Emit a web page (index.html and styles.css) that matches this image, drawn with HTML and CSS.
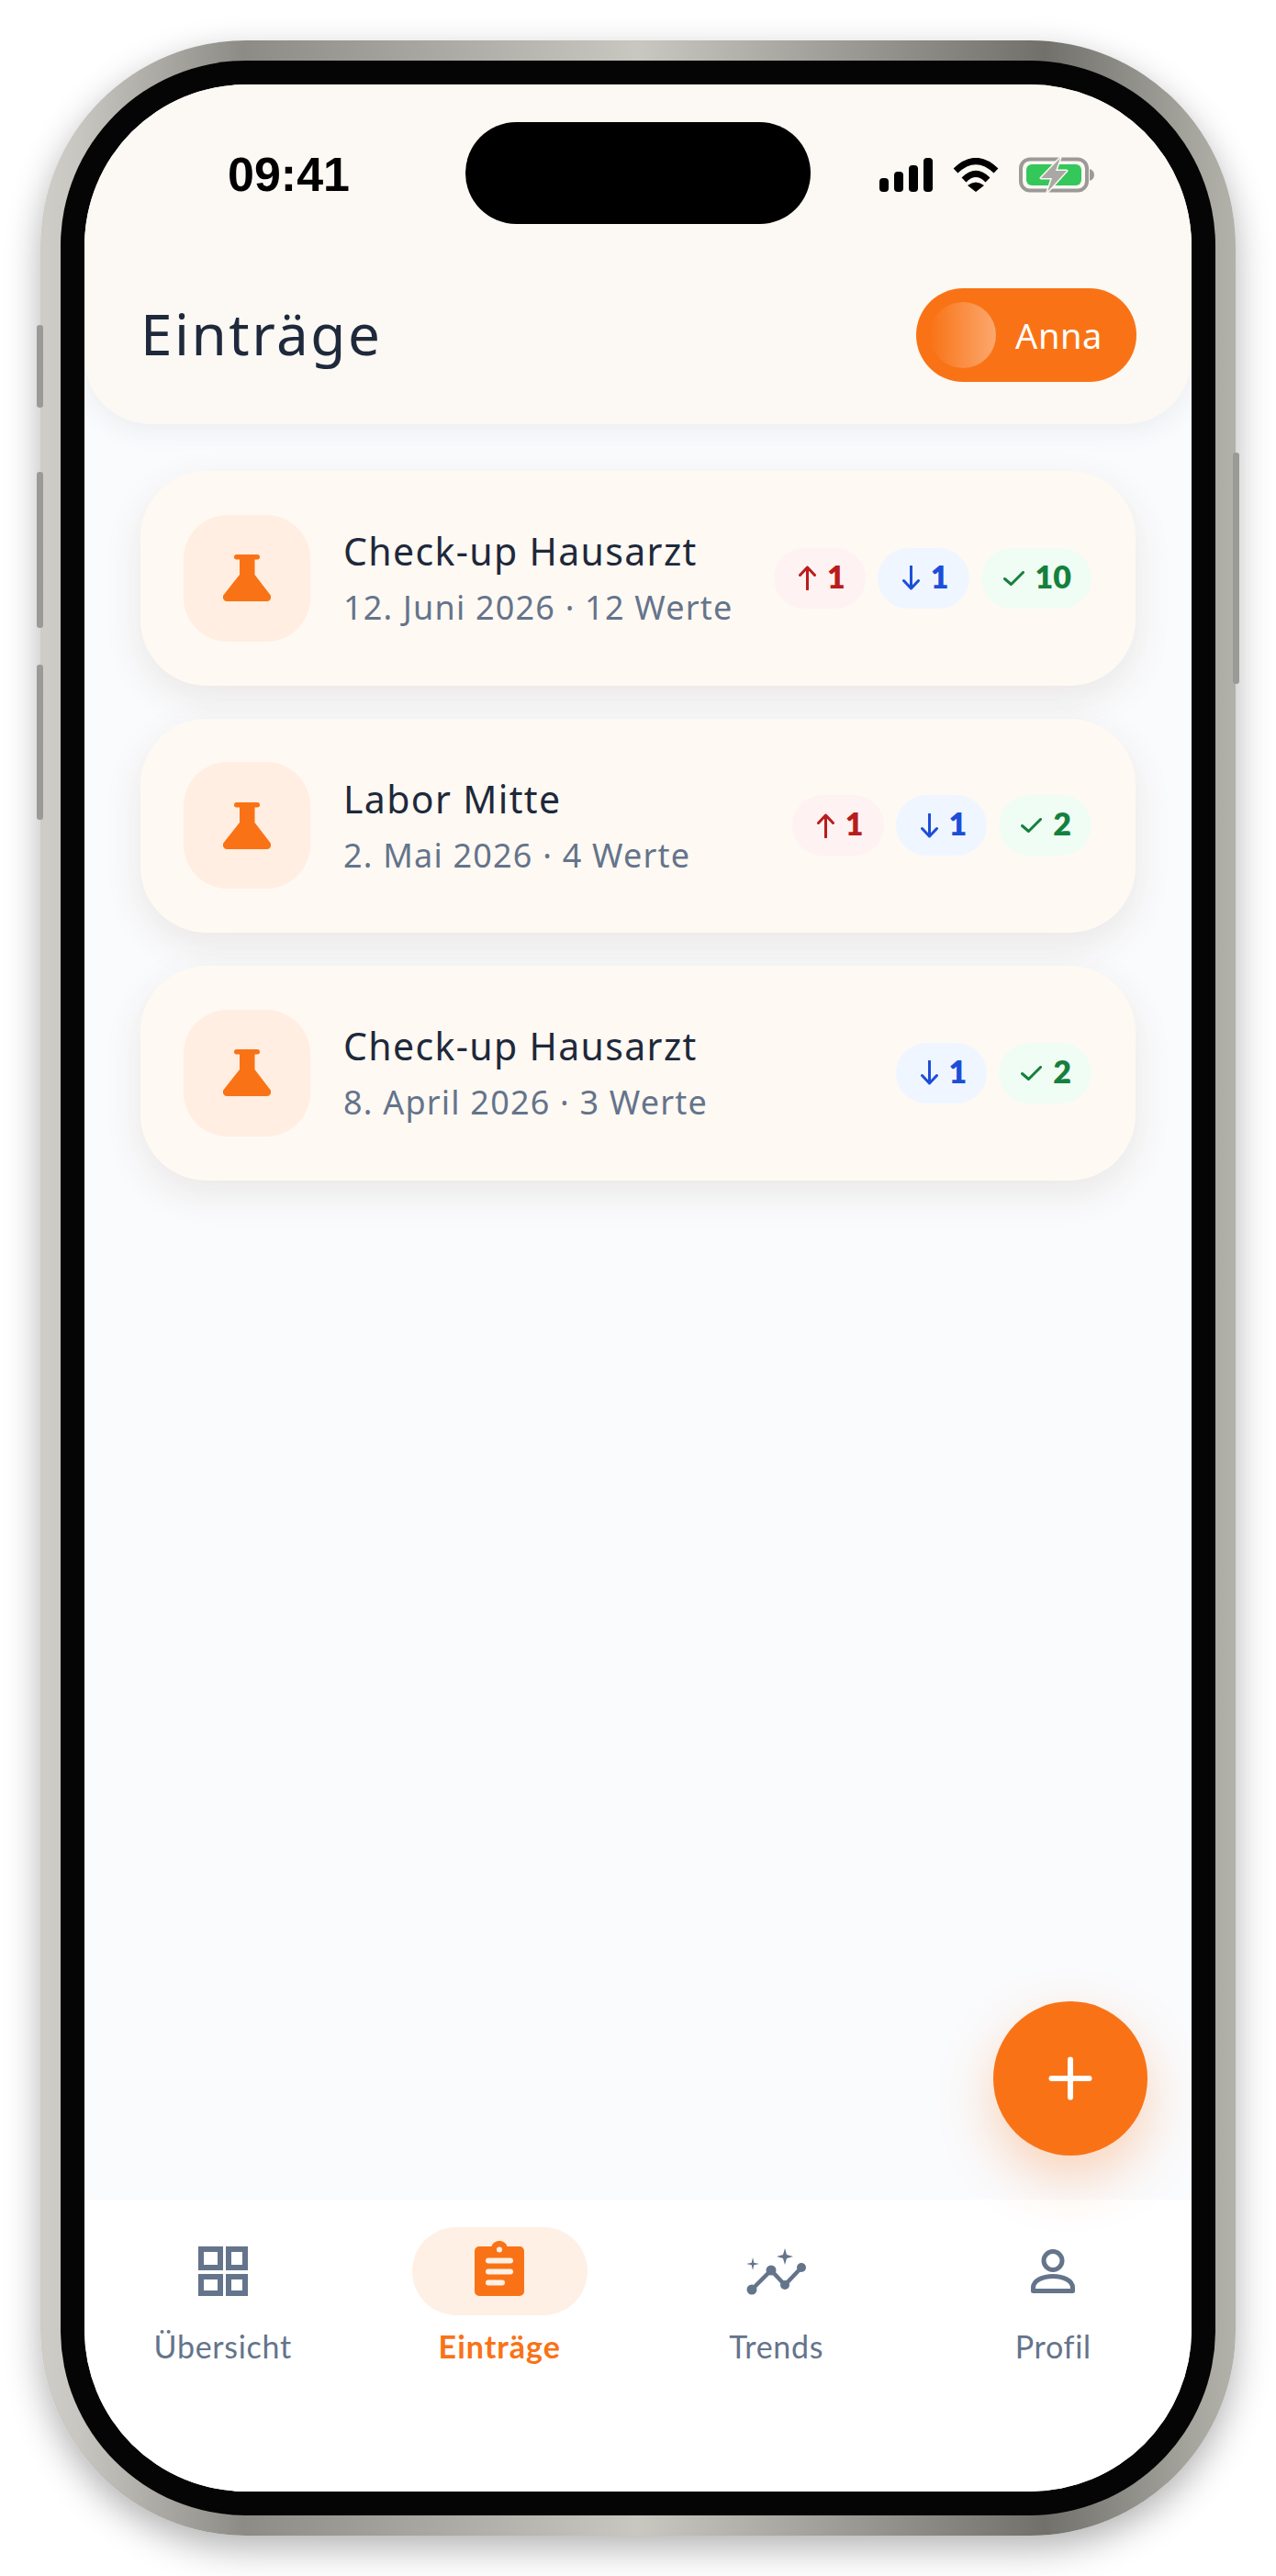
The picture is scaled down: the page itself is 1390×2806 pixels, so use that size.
FILE: index.html
```html
<!DOCTYPE html>
<html lang="de">
<head>
<meta charset="utf-8">
<title>Einträge</title>
<link rel="stylesheet" href="styles.css">
</head>
<body>
<div class="phone">
  <span class="side side-a"></span>
  <span class="side side-b"></span>
  <span class="side side-c"></span>
  <span class="side side-r"></span>
  <div class="bezel">
    <div class="screen">
      <div class="island"></div>
      <header class="header">
        <div class="status">
          <span class="time">09:41</span>
          <div class="status-icons">
            <svg class="i-signal" viewBox="0 0 58 37"><rect x="0" y="22" width="10" height="15" rx="4"/><rect x="16" y="15" width="10" height="22" rx="4"/><rect x="32" y="8" width="10" height="29" rx="4"/><rect x="48" y="0" width="10" height="37" rx="4"/></svg>
            <svg class="i-wifi" viewBox="0 0 50 37"><path class="wf" d="M3 14Q25 -7 47 14"/><path class="wf" d="M12 24Q25 11 38 24"/><path d="M16 30Q25 23 34 30L25 37Z"/></svg>
            <svg class="i-batt" viewBox="0 0 82 39"><rect class="b-out" x="2" y="2.500" width="72" height="34" rx="10"/><path class="b-cap" d="M77 13c3 1 5 3 5 6.500s-2 5.500-5 6.500z"/><rect class="b-fill" x="8" y="8" width="60" height="23" rx="6"/><path class="b-bolt" d="M45 1L24 23H36L31 38L52 15H40Z"/></svg>
          </div>
        </div>
        <div class="title-row">
          <h1 class="title">Einträge</h1>
          <div class="user-pill"><span class="knob"></span><span class="user-name">Anna</span></div>
        </div>
      </header>

      <main class="list">
        <article class="card">
          <div class="card-icon"><svg class="i-flask" viewBox="0 0 52 51"><use href="#flask"/></svg></div>
          <div class="card-text">
            <div class="card-title">Check-up Hausarzt</div>
            <div class="card-sub">12. Juni 2026 · 12 Werte</div>
          </div>
          <div class="badges">
            <span class="badge red"><svg class="i-arrow" viewBox="0 0 19 27"><use href="#up"/></svg><b>1</b></span>
            <span class="badge blue"><svg class="i-arrow" viewBox="0 0 19 27"><use href="#down"/></svg><b>1</b></span>
            <span class="badge green"><svg class="i-check" viewBox="0 0 23 16"><use href="#check"/></svg><b>10</b></span>
          </div>
        </article>
        <article class="card">
          <div class="card-icon"><svg class="i-flask" viewBox="0 0 52 51"><use href="#flask"/></svg></div>
          <div class="card-text">
            <div class="card-title">Labor Mitte</div>
            <div class="card-sub">2. Mai 2026 · 4 Werte</div>
          </div>
          <div class="badges">
            <span class="badge red"><svg class="i-arrow" viewBox="0 0 19 27"><use href="#up"/></svg><b>1</b></span>
            <span class="badge blue"><svg class="i-arrow" viewBox="0 0 19 27"><use href="#down"/></svg><b>1</b></span>
            <span class="badge green"><svg class="i-check" viewBox="0 0 23 16"><use href="#check"/></svg><b>2</b></span>
          </div>
        </article>
        <article class="card">
          <div class="card-icon"><svg class="i-flask" viewBox="0 0 52 51"><use href="#flask"/></svg></div>
          <div class="card-text">
            <div class="card-title">Check-up Hausarzt</div>
            <div class="card-sub">8. April 2026 · 3 Werte</div>
          </div>
          <div class="badges">
            <span class="badge blue"><svg class="i-arrow" viewBox="0 0 19 27"><use href="#down"/></svg><b>1</b></span>
            <span class="badge green"><svg class="i-check" viewBox="0 0 23 16"><use href="#check"/></svg><b>2</b></span>
          </div>
        </article>
      </main>

      <button class="fab" type="button" aria-label="Neu"><svg class="i-plus" viewBox="0 0 48 48"><path d="M24 3.500V44.500M3.500 24H44.500"/></svg></button>

      <nav class="nav">
        <div class="tab">
          <span class="tab-icon"><svg class="i-grid" viewBox="0 0 54 54"><path d="M3 3h21v20H3zM33 3h18v20H33zM3 33h21v18H3zM33 33h18v18H33z"/></svg></span>
          <span class="tab-label">Übersicht</span>
        </div>
        <div class="tab active">
          <span class="tab-icon"><svg class="i-clip" viewBox="0 0 54 60"><path class="cb" d="M5 6h13.500C19.500 2.500 23 0 27 0s7.500 2.500 8.500 6H49a5 5 0 0 1 5 5v44a5 5 0 0 1-5 5H5a5 5 0 0 1-5-5V11a5 5 0 0 1 5-5z"/><circle class="cl-dot" cx="27" cy="9.500" r="3"/><path class="cl" d="M15 21.500H39M15 33.500H39M15 45.500H30"/></svg></span>
          <span class="tab-label">Einträge</span>
        </div>
        <div class="tab">
          <span class="tab-icon"><svg class="i-trend" viewBox="0 0 65 51"><path class="tl" d="M6 45L27 24L42 40L60 21"/><circle cx="6" cy="45" r="5.500"/><circle cx="27" cy="24" r="5.500"/><circle cx="42" cy="40" r="5"/><circle cx="60" cy="21" r="5"/><path d="M42 0l2 7 7 2-7 2-2 7-2-7-7-2 7-2z"/><path d="M7 10l1.300 5.700 5.700 1.300-5.700 1.300L7 24l-1.300-5.700L0 17l5.700-1.300z"/></svg></span>
          <span class="tab-label">Trends</span>
        </div>
        <div class="tab">
          <span class="tab-icon"><svg class="i-user" viewBox="0 0 48 48"><circle class="us" cx="24" cy="12.500" r="10"/><path class="us" d="M2.500 45.500V42C2.500 34 13 29.500 24 29.500S45.500 34 45.500 42v3.500z"/></svg></span>
          <span class="tab-label">Profil</span>
        </div>
      </nav>
    </div>
  </div>
</div>

<svg class="defs" width="0" height="0" aria-hidden="true">
  <defs>
    <g id="flask"><rect x="12" y="0" width="28" height="5.500" rx="2.700"/><path d="M18 4h16.500v18L51 43.500a4.500 4.500 0 0 1-3.500 7.500H4.500A4.500 4.500 0 0 1 1 43.500L18 22z"/></g>
    <path id="up" class="ar" d="M9.500 26V2M1.500 10.500L9.500 2l8 8.500"/>
    <path id="down" class="ar" d="M9.500 1V25M1.500 16.500L9.500 25l8-8.500"/>
    <path id="check" class="ar" d="M1.500 8.500L8.500 14.500L21.500 1.500"/>
  </defs>
</svg>
</body>
</html>
```
FILE: styles.css
```css
* { box-sizing: border-box; }
html, body { margin: 0; padding: 0; background: #fff; }
body { width: 1390px; height: 2806px; overflow: hidden; font-family: "Lato", "Noto Sans", sans-serif; }
.defs { position: absolute; }

.phone {
  position: relative;
  width: 1302px;
  height: 2718px;
  margin: 44px 0 0 44px;
  padding: 22px;
  border-radius: 224px;
  background: linear-gradient(90deg, #cfcdc8 0%, #c9c7c2 3%, #8c8b86 17%, #c8c7c0 50%, #71706b 84%, #a8a8a1 97%, #b2b1aa 100%);
  box-shadow: 0 14px 38px rgba(0, 0, 0, .3);
}
.side { position: absolute; width: 7px; background: #9a9a96; border-radius: 3px; }
.side-a { left: -4px; top: 310px; height: 90px; }
.side-b { left: -4px; top: 470px; height: 170px; }
.side-c { left: -4px; top: 680px; height: 169px; }
.side-r { right: -4px; top: 449px; height: 252px; }

.bezel { height: 100%; padding: 26px; border-radius: 202px; background: #050505; }
.screen {
  position: relative;
  display: flex;
  flex-direction: column;
  height: 100%;
  overflow: hidden;
  border-radius: 176px;
  background: #fafbfd;
}
.island { position: absolute; left: 415px; top: 41px; width: 376px; height: 111px; border-radius: 56px; background: #000; z-index: 3; }

.header {
  flex: none;
  height: 370px;
  padding-top: 79px;
  background: #fcf8f3;
  border-radius: 0 0 72px 72px;
  box-shadow: 0 6px 30px rgba(30, 41, 59, .07);
  z-index: 1;
}
.status { display: flex; justify-content: space-between; align-items: center; height: 38px; padding: 0 106px 0 156px; }
.time { font: 700 52px/38px "Liberation Sans", Arial, sans-serif; color: #000; }
.status-icons { display: flex; align-items: center; gap: 22px; }
.i-signal { width: 58px; height: 37px; fill: #000; display: block; }
.i-wifi { width: 50px; height: 37px; fill: #000; display: block; }
.wf { fill: none; stroke: #000; stroke-width: 7; }
.i-batt { width: 82px; height: 39px; display: block; }
.b-out { fill: none; stroke: #9c9a96; stroke-width: 4; }
.b-cap { fill: #9c9a96; }
.b-fill { fill: #34c759; }
.b-bolt { fill: #aaa8a4; stroke: #fcf8f3; stroke-width: 3; stroke-linejoin: round; paint-order: stroke; }

.title-row { display: flex; justify-content: space-between; align-items: center; margin-top: 105px; padding: 0 60px 0 61px; }
.title { margin: 0 0 4px; font-family: "Noto Sans", sans-serif; font-size: 62px; font-weight: 400; line-height: 98px; letter-spacing: 2.500px; color: #1e293b; }
.user-pill { display: flex; align-items: center; gap: 21px; width: 240px; height: 102px; padding: 0 0 0 15px; border-radius: 51px; background: #f97316; }
.knob { width: 72px; height: 72px; border-radius: 50%; background: linear-gradient(90deg, rgba(255, 255, 255, 0), rgba(255, 255, 255, .38)); }
.user-name { font-family: "Noto Sans", sans-serif; font-size: 38px; letter-spacing: .6px; color: #fff; }

.list { flex: 1; display: flex; flex-direction: column; gap: 36px; padding: 51px 61px 0; }
.card {
  display: flex;
  align-items: center;
  height: 233.500px;
  padding: 0 48px 0 47px;
  border-radius: 72px;
  background: #fff9f3;
  box-shadow: 0 14px 40px rgba(100, 60, 20, .1);
}
.card-icon { flex: none; display: flex; align-items: center; justify-content: center; width: 138px; height: 138px; border-radius: 48px; background: #ffeee1; }
.i-flask { width: 52px; height: 51px; fill: #f97316; display: block; }
.card-text { flex: 1; margin-left: 36px; }
.card-title { font-family: "Noto Sans", sans-serif; font-size: 41px; line-height: 56px; letter-spacing: 1.350px; color: #1e293b; }
.card-sub { font-family: "Noto Sans", sans-serif; font-size: 36px; line-height: 50px; margin-top: 9px; letter-spacing: 1.200px; color: #64748b; }

.badges { display: flex; gap: 13px; }
.badge { display: flex; align-items: center; gap: 12px; height: 66px; padding: 0 22px 0 27px; border-radius: 33px; }
.badge b { font-size: 34px; font-weight: 800; line-height: 1; margin-top: -4px; }
.red { background: #fef2f2; color: #b91c1c; }
.blue { background: #eff6ff; color: #1d4ed8; }
.green { background: #f0fdf4; color: #15803d; }
.i-arrow { width: 19px; height: 27px; display: block; }
.i-check { width: 23px; height: 16px; display: block; margin-left: -3px; }
.ar { fill: none; stroke: currentColor; stroke-width: 3; stroke-linecap: round; stroke-linejoin: round; }

.fab {
  position: absolute;
  left: 990px;
  top: 2088px;
  width: 168px;
  height: 168px;
  padding: 0;
  border: 0;
  border-radius: 50%;
  background: #f97316;
  box-shadow: 0 24px 60px rgba(249, 115, 22, .3);
  display: flex;
  align-items: center;
  justify-content: center;
  z-index: 2;
}
.i-plus { width: 48px; height: 48px; fill: none; stroke: #fff; stroke-width: 6; stroke-linecap: round; }

.nav { flex: none; height: 318px; display: grid; grid-template-columns: repeat(4, 1fr); padding-top: 30px; background: #fff; }
.tab { display: flex; flex-direction: column; align-items: center; }
.tab-icon { display: flex; align-items: center; justify-content: center; width: 191px; height: 96px; border-radius: 48px; color: #64748b; }
.tab-label { margin-top: 12px; font-size: 34px; line-height: 44px; color: #64748b; letter-spacing: .7px; }
.active .tab-icon { background: #fff0e5; }
.active .tab-label { color: #f97316; font-weight: 700; letter-spacing: 1px; }
.i-grid { width: 54px; height: 54px; fill: none; stroke: #64748b; stroke-width: 6; display: block; }
.i-clip { width: 54px; height: 60px; display: block; margin-top: -6px; }
.cb { fill: #f97316; }
.cl-dot { fill: #fff0e5; }
.cl { fill: none; stroke: #fff0e5; stroke-width: 6; stroke-linecap: round; }
.i-trend { width: 65px; height: 51px; fill: #64748b; display: block; }
.tl { fill: none; stroke: #64748b; stroke-width: 4.500; }
.i-user { width: 48px; height: 48px; fill: none; display: block; }
.us { stroke: #64748b; stroke-width: 5; stroke-linejoin: round; }
```
